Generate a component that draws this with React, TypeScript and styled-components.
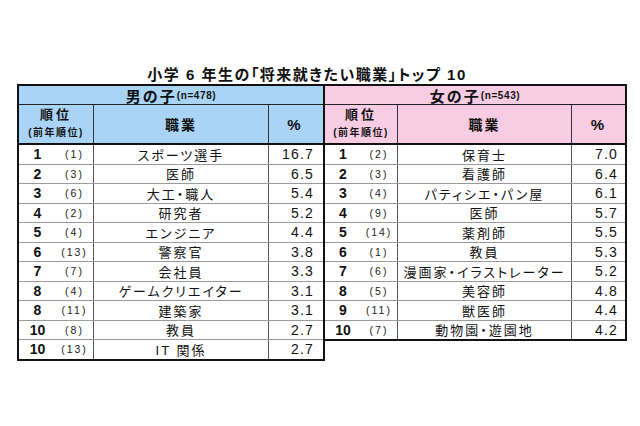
import React from 'react';
import styled, { createGlobalStyle } from 'styled-components';

const GlobalStyle = createGlobalStyle`
    html, body {
        margin: 0;
        padding: 0;
        background: #ffffff;
    }
    body {
        font-family: "Liberation Sans", "Noto Sans CJK JP", sans-serif;
        color: #111;
    }
`;

type Row = { rank: string; prev: string; job: string; pct: string };

const boys: Row[] = [
    { rank: '1', prev: '(1)', job: 'スポーツ選手', pct: '16.7' },
    { rank: '2', prev: '(3)', job: '医師', pct: '6.5' },
    { rank: '3', prev: '(6)', job: '大工・職人', pct: '5.4' },
    { rank: '4', prev: '(2)', job: '研究者', pct: '5.2' },
    { rank: '5', prev: '(4)', job: 'エンジニア', pct: '4.4' },
    { rank: '6', prev: '(13)', job: '警察官', pct: '3.8' },
    { rank: '7', prev: '(7)', job: '会社員', pct: '3.3' },
    { rank: '8', prev: '(4)', job: 'ゲームクリエイター', pct: '3.1' },
    { rank: '8', prev: '(11)', job: '建築家', pct: '3.1' },
    { rank: '10', prev: '(8)', job: '教員', pct: '2.7' },
    { rank: '10', prev: '(13)', job: 'IT 関係', pct: '2.7' },
];

const girls: Row[] = [
    { rank: '1', prev: '(2)', job: '保育士', pct: '7.0' },
    { rank: '2', prev: '(3)', job: '看護師', pct: '6.4' },
    { rank: '3', prev: '(4)', job: 'パティシエ・パン屋', pct: '6.1' },
    { rank: '4', prev: '(9)', job: '医師', pct: '5.7' },
    { rank: '5', prev: '(14)', job: '薬剤師', pct: '5.5' },
    { rank: '6', prev: '(1)', job: '教員', pct: '5.3' },
    { rank: '7', prev: '(6)', job: '漫画家・イラストレーター', pct: '5.2' },
    { rank: '8', prev: '(5)', job: '美容師', pct: '4.8' },
    { rank: '9', prev: '(11)', job: '獣医師', pct: '4.4' },
    { rank: '10', prev: '(7)', job: '動物園・遊園地', pct: '4.2' },
];

const Page = styled.div`
    width: 640px;
    height: 426px;
    padding: 66px 0 0 17px;
    box-sizing: border-box;
`;

const Title = styled.h1`
    margin: 0;
    width: 604px;
    padding-right: 24px;
    box-sizing: border-box;
    text-align: center;
    font-size: 15px;
    line-height: 18px;
    font-weight: bold;
    letter-spacing: 1.5px;
    font-feature-settings: "palt";
`;

const Tables = styled.div`
    display: flex;
    align-items: flex-start;
`;

const Table = styled.div<{ $left?: boolean }>`
    border: 2px solid #111;
    border-left: ${(p) => (p.$left ? '2px solid #111' : 'none')};
    background: #fff;
`;

const GroupHeader = styled.div<{ $bg: string }>`
    height: 18px;
    background: ${(p) => p.$bg};
    border-bottom: 1px solid #222;
    display: flex;
    align-items: center;
    justify-content: center;
    font-weight: bold;
`;

const GroupLabel = styled.span`
    font-size: 15px;
    letter-spacing: 2px;
`;

const GroupCount = styled.span`
    font-size: 10px;
    letter-spacing: 0.6px;
`;

const HeadRow = styled.div<{ $bg: string }>`
    display: flex;
    height: 38px;
    background: ${(p) => p.$bg};
    border-bottom: 2px solid #111;
    font-weight: bold;
`;

const BodyRow = styled.div`
    display: flex;
    height: 19.5px;
    box-sizing: border-box;
    border-bottom: 1px solid #9a9a9a;
    &:last-child {
        border-bottom: none;
        height: 18.5px;
    }
`;

const Cell = styled.div<{ $w: number; $last?: boolean; $dark?: boolean }>`
    width: ${(p) => p.$w}px;
    box-sizing: border-box;
    border-right: ${(p) => (p.$last ? 'none' : `1px solid ${p.$dark ? '#333' : '#555'}`)};
    display: flex;
    align-items: center;
`;

const HeadCell = styled(Cell)`
    flex-direction: column;
    justify-content: center;
`;

const RankHead = styled.div`
    font-size: 13px;
    letter-spacing: 3px;
    line-height: 16px;
    margin-top: -2px;
`;

const PrevHead = styled.div`
    font-size: 10px;
    letter-spacing: 1.5px;
    line-height: 14px;
    margin-top: 3px;
`;

const JobHead = styled.div`
    font-size: 14px;
    letter-spacing: 2px;
`;

const PctHead = styled.div`
    font-size: 15px;
`;

const RankNum = styled.span`
    flex: 1;
    text-align: center;
    font-size: 14px;
    font-weight: bold;
`;

const PrevNum = styled.span`
    flex: 1;
    text-align: center;
    font-size: 10.5px;
    letter-spacing: 2px;
    color: #222;
`;

const JobCell = styled(Cell)`
    justify-content: center;
    font-size: 13px;
    letter-spacing: 2px;
    font-feature-settings: "palt";
    white-space: nowrap;
`;

const PctCell = styled(Cell)`
    justify-content: flex-end;
    padding-right: 5px;
    font-size: 14px;
    letter-spacing: 1.2px;
`;

type Widths = { rank: number; job: number; pct: number };

const RankingTable: React.FC<{
    label: string;
    count: string;
    bg: string;
    rows: Row[];
    widths: Widths;
    left?: boolean;
}> = ({ label, count, bg, rows, widths, left }) => (
    <Table $left={left} style={{ width: widths.rank + widths.job + widths.pct + (left ? 4 : 2) }}>
        <GroupHeader $bg={bg}>
            <GroupLabel>{label}</GroupLabel>
            <GroupCount>{count}</GroupCount>
        </GroupHeader>
        <HeadRow $bg={bg}>
            <HeadCell $w={widths.rank} $dark>
                <RankHead>順位</RankHead>
                <PrevHead>(前年順位)</PrevHead>
            </HeadCell>
            <HeadCell $w={widths.job} $dark>
                <JobHead>職業</JobHead>
            </HeadCell>
            <HeadCell $w={widths.pct} $last>
                <PctHead>%</PctHead>
            </HeadCell>
        </HeadRow>
        {rows.map((r, i) => (
            <BodyRow key={i}>
                <Cell $w={widths.rank}>
                    <RankNum>{r.rank}</RankNum>
                    <PrevNum>{r.prev}</PrevNum>
                </Cell>
                <JobCell $w={widths.job}>{r.job}</JobCell>
                <PctCell $w={widths.pct} $last>{r.pct}</PctCell>
            </BodyRow>
        ))}
    </Table>
);

const App: React.FC = () => (
    <Page>
        <GlobalStyle />
        <Title>小学 6 年生の「将来就きたい職業」トップ 10</Title>
        <Tables>
            <RankingTable
                left
                label="男の子"
                count="(n=478)"
                bg="#a9d4f5"
                rows={boys}
                widths={{ rank: 75, job: 175, pct: 50 }}
            />
            <RankingTable
                label="女の子"
                count="(n=543)"
                bg="#f8cde4"
                rows={girls}
                widths={{ rank: 73, job: 174, pct: 51 }}
            />
        </Tables>
    </Page>
);

export default App;
